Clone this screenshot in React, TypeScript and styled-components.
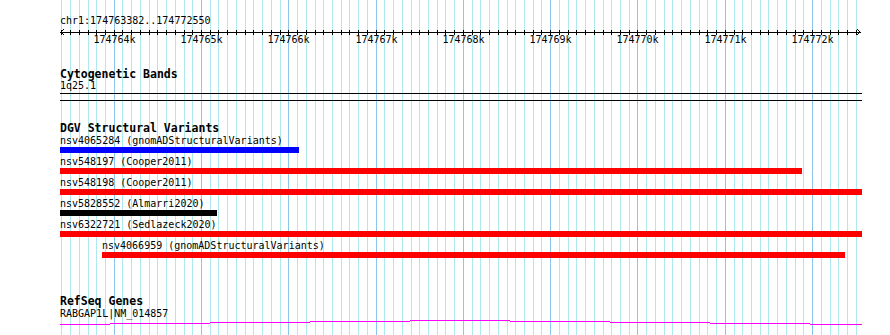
import React from "react";
import styled, { createGlobalStyle } from "styled-components";

const VIEW_START = 174763382;
const VIEW_END = 174772550;
const ORIGIN = 59.8;
const SCALE = 0.08729;
const LEFT = 60;
const RIGHT = 861;
const PAGE_H = 335;

const toX = (bp: number) => ORIGIN + (bp - VIEW_START) * SCALE;

interface Variant {
  id: string;
  source: string;
  start: number;
  end: number;
  color: string;
}

const variants: Variant[] = [
  { id: "nsv4065284", source: "gnomADStructuralVariants", start: 174762900, end: 174766122, color: "#0000ff" },
  { id: "nsv548197", source: "Cooper2011", start: 174762000, end: 174771885, color: "#ff0000" },
  { id: "nsv548198", source: "Cooper2011", start: 174762000, end: 174775000, color: "#ff0000" },
  { id: "nsv5828552", source: "Almarri2020", start: 174761500, end: 174765183, color: "#000000" },
  { id: "nsv6322721", source: "Sedlazeck2020", start: 174760000, end: 174780000, color: "#ff0000" },
  { id: "nsv4066959", source: "gnomADStructuralVariants", start: 174763865, end: 174772377, color: "#ff0000" },
];

const GlobalStyle = createGlobalStyle`
  html, body {
    margin: 0;
    padding: 0;
    background: #ffffff;
  }
  body {
    font-family: "DejaVu Sans Mono", "Liberation Mono", monospace;
    color: #000;
  }
`;

const Page = styled.div`
  position: relative;
  width: 890px;
  height: ${PAGE_H}px;
  overflow: hidden;
  background: #ffffff;
`;

const GridLayer = styled.svg`
  position: absolute;
  left: 0;
  top: 0;
`;

const Tracks = styled.div`
  position: relative;
  display: flex;
  flex-direction: column;
  padding-left: ${LEFT}px;
  width: ${RIGHT - LEFT + 1}px;
`;

const RefLabel = styled.div`
  margin-top: 16px;
  height: 10px;
  font-size: 10px;
  line-height: 10px;
  white-space: nowrap;
`;

const Ruler = styled.svg`
  display: block;
  overflow: visible;
  font-family: "DejaVu Sans Mono", monospace;
  font-size: 10px;
`;

const TrackTitle = styled.div<{ $gap: number }>`
  margin-top: ${({ $gap }) => $gap}px;
  height: 12px;
  font-size: 11.5px;
  line-height: 12px;
  font-weight: bold;
  white-space: nowrap;
`;

const ItemLabel = styled.div`
  height: 10px;
  font-size: 10px;
  line-height: 10px;
  white-space: nowrap;
`;

const BandLabel = styled(ItemLabel)`
  margin-top: 1px;
`;

const Band = styled.div`
  margin-top: 2px;
  height: 6px;
  border-top: 1px solid #000;
  border-bottom: 1px solid #000;
`;

const FeatureList = styled.div`
  margin-top: 2px;
  display: flex;
  flex-direction: column;
`;

const FeatureRow = styled.div`
  height: 21px;
  display: flex;
  flex-direction: column;
  align-items: flex-start;
`;

const Bar = styled.div<{ $color: string }>`
  margin-top: 1px;
  height: 6px;
  background: ${({ $color }) => $color};
`;

const GeneLabel = styled(ItemLabel)`
  margin-top: 2px;
`;

const GeneLine = styled.svg`
  display: block;
`;

const Grid = () => {
  const lines: { x: number; major: boolean }[] = [];
  for (let bp = Math.ceil(VIEW_START / 100) * 100; bp <= VIEW_END; bp += 100) {
    lines.push({ x: Math.round(toX(bp)), major: bp % 1000 === 0 });
  }
  return (
    <GridLayer width={890} height={PAGE_H} shapeRendering="crispEdges">
      {lines.map((l) => (
        <rect key={l.x} x={l.x} y={0} width={1} height={PAGE_H} fill={l.major ? "#8cc6ec" : "#ade9ef"} />
      ))}
    </GridLayer>
  );
};

const ScaleBar = () => {
  const w = RIGHT - LEFT + 1;
  const ticks: { x: number; bp: number }[] = [];
  for (let bp = Math.ceil(VIEW_START / 100) * 100; bp <= VIEW_END; bp += 100) {
    ticks.push({ x: Math.round(toX(bp)) - LEFT, bp });
  }
  return (
    <Ruler width={w} height={24} shapeRendering="crispEdges">
      <rect x={0} y={6} width={w - 1} height={1} fill="#000" />
      {ticks.map((t) => (
        <rect key={t.bp} x={t.x} y={4} width={1} height={5} fill="#000" />
      ))}
      <path d="M4 3 L1 6 L4 9 M1 6 L3 6" stroke="#000" fill="none" />
      <path d="M797 3 L800 6 L797 9" stroke="#000" fill="none" />
      {ticks
        .filter((t) => t.bp % 1000 === 0)
        .map((t) => (
          <text key={`l${t.bp}`} x={t.x + 0.5} y={17} textAnchor="middle" fill="#000">
            {`${t.bp / 1000}k`}
          </text>
        ))}
    </Ruler>
  );
};

const IntronLine = () => {
  const runs: { x0: number; x1: number; y: number }[] = [];
  for (let x = LEFT; x <= RIGHT; x++) {
    const rise = Math.max(0, Math.floor(Math.min(x - 10, 909 - x) / 100));
    const y = 5 - rise;
    const last = runs[runs.length - 1];
    if (last && last.y === y) last.x1 = x;
    else runs.push({ x0: x, x1: x, y });
  }
  return (
    <GeneLine width={RIGHT - LEFT + 1} height={6} shapeRendering="crispEdges">
      {runs.map((r) => (
        <rect key={r.x0} x={r.x0 - LEFT} y={r.y} width={r.x1 - r.x0 + 1} height={1} fill="#ff00ff" />
      ))}
    </GeneLine>
  );
};

const VariantRow = ({ v }: { v: Variant }) => {
  const x0 = Math.max(LEFT, Math.round(toX(v.start)));
  const x1 = Math.min(RIGHT + 1, Math.round(toX(v.end)));
  return (
    <FeatureRow>
      <ItemLabel style={{ marginLeft: x0 - LEFT }}>{`${v.id} (${v.source})`}</ItemLabel>
      <Bar $color={v.color} style={{ marginLeft: x0 - LEFT, width: x1 - x0 }} />
    </FeatureRow>
  );
};

export default function App() {
  return (
    <Page>
      <GlobalStyle />
      <Grid />
      <Tracks>
        <RefLabel>chr1:174763382..174772550</RefLabel>
        <ScaleBar />

        <TrackTitle $gap={18}>Cytogenetic Bands</TrackTitle>
        <BandLabel>1q25.1</BandLabel>
        <Band />

        <TrackTitle $gap={21}>DGV Structural Variants</TrackTitle>
        <FeatureList>
          {variants.map((v) => (
            <VariantRow key={v.id} v={v} />
          ))}
        </FeatureList>

        <TrackTitle $gap={33}>RefSeq Genes</TrackTitle>
        <GeneLabel>RABGAP1L|NM_014857</GeneLabel>
        <IntronLine />
      </Tracks>
    </Page>
  );
}
